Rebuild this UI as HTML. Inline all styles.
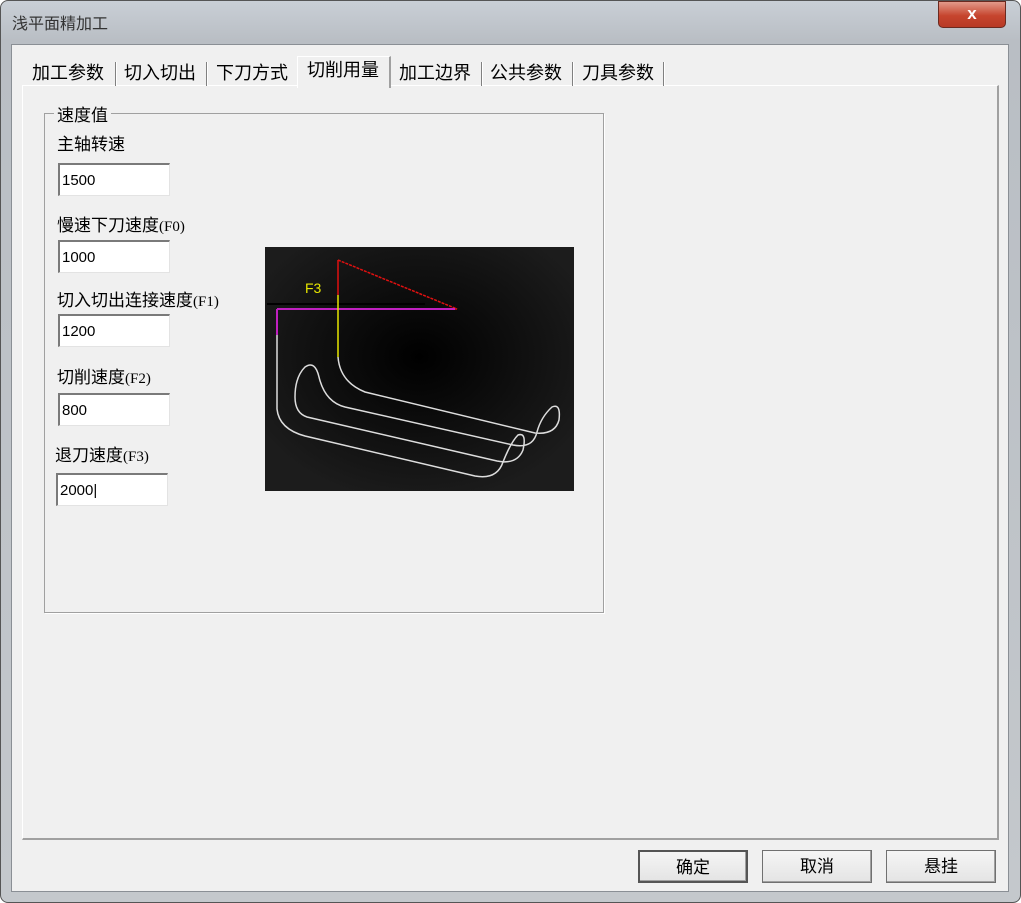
<!DOCTYPE html>
<html><head><meta charset="utf-8"><style>
*{margin:0;padding:0;box-sizing:border-box}
body{width:1021px;height:903px;overflow:hidden;background:#fff;font-family:"Liberation Sans","Noto Sans CJK SC",sans-serif;font-size:17px;color:#000;position:relative}
.a{position:absolute}
.frame{left:0;top:0;width:1021px;height:903px;border-radius:8px;background:linear-gradient(#c9cfd6,#b9bec4 40px,#c4c8cc);border:1px solid #555}
.client{left:11px;top:44px;width:998px;height:848px;background:#f0f0f0;border:1px solid #8a8f95}
.panel{left:22px;top:85px;width:977px;height:755px;border-left:1px solid #fff;border-top:1px solid #fff;border-right:2px solid #a0a0a0;border-bottom:2px solid #a0a0a0}
.tab{top:59px;height:28px;line-height:28px;font-size:18px}
.sep{top:62px;width:2px;height:24px;border-left:1px solid #808080;border-right:1px solid #fff}
.lbl{left:57px}
.p{font-size:15px;font-family:'Liberation Serif',serif}
.in{left:58px;width:112px;height:33px;background:#fff;border-top:2px solid #7a7a7a;border-left:2px solid #7a7a7a;border-right:1px solid #e3e3e3;border-bottom:1px solid #e3e3e3;font-size:15px;padding:7px 0 0 2px}
.btn{top:850px;height:33px;width:110px;background:linear-gradient(#f5f5f5,#e4e4e4);border:1px solid #707070;text-align:center;line-height:31px;font-size:17px;box-shadow:inset -1px -1px #a0a0a0}
</style></head><body>
<div class="a frame"></div>
<div class="a" style="left:12px;top:10px;font-size:16px;color:#333">浅平面精加工</div>
<div class="a" style="left:938px;top:1px;width:68px;height:27px;border-radius:0 0 5px 5px;background:linear-gradient(#e29a8a,#c6452e 55%,#b83a25);border:1px solid #6b2a20;color:#fff;text-align:center;font-weight:bold;font-size:17px;line-height:24px">x</div>
<div class="a client"></div>
<div class="a panel"></div>
<div class="a" style="left:297px;top:56px;width:94px;height:32px;background:#f0f0f0;border:1px solid #fff;border-bottom:none;border-right:2px solid #a0a0a0"></div>
<div class="a tab" style="left:32px">加工参数</div><div class="a sep" style="left:115px"></div>
<div class="a tab" style="left:124px">切入切出</div><div class="a sep" style="left:206px"></div>
<div class="a tab" style="left:216px">下刀方式</div>
<div class="a tab" style="left:307px;top:56px">切削用量</div>
<div class="a tab" style="left:399px">加工边界</div><div class="a sep" style="left:481px"></div>
<div class="a tab" style="left:490px">公共参数</div><div class="a sep" style="left:572px"></div>
<div class="a tab" style="left:582px">刀具参数</div><div class="a sep" style="left:663px"></div>
<div class="a" style="left:44px;top:113px;width:560px;height:500px;border:1px solid #a0a0a0;box-shadow:1px 1px #fff"></div>
<div class="a" style="left:54px;top:101px;background:#f0f0f0;padding:0 3px">速度值</div>
<div class="a lbl" style="top:130px">主轴转速</div>
<div class="a in" style="top:163px">1500</div>
<div class="a lbl" style="top:211px">慢速下刀速度<span class="p">(F0)</span></div>
<div class="a in" style="top:240px">1000</div>
<div class="a lbl" style="top:286px">切入切出连接速度<span class="p">(F1)</span></div>
<div class="a in" style="top:314px">1200</div>
<div class="a lbl" style="top:363px">切削速度<span class="p">(F2)</span></div>
<div class="a in" style="top:393px">800</div>
<div class="a lbl" style="left:55px;top:441px">退刀速度<span class="p">(F3)</span></div>
<div class="a in" style="left:56px;top:473px">2000|</div>
<svg class="a" style="left:265px;top:247px" width="309" height="244" viewBox="0 0 309 244">
<defs><radialGradient id="g" cx="0.5" cy="0.45" r="0.6"><stop offset="0" stop-color="#000"/><stop offset="1" stop-color="#1c1c1c"/></radialGradient></defs>
<rect width="309" height="244" fill="url(#g)"/>
<path d="M73 13 L73 48" stroke="#e01010" stroke-width="1.5"/>
<path d="M73 13 L192 62 L12 62" stroke="#e01010" stroke-width="1.5" fill="none" stroke-dasharray="3,1"/>
<path d="M2 57 L160 57" stroke="#000" stroke-width="2"/>
<text x="40" y="46" fill="#e6e600" font-size="14" font-family="Liberation Sans">F3</text>
<path d="M12 62 L190 62" stroke="#c020c0" stroke-width="2"/>
<path d="M12 62 L12 88" stroke="#c020c0" stroke-width="2"/>
<path d="M73 48 L73 110" stroke="#e6e600" stroke-width="1.5"/>
<g stroke="#ddd" stroke-width="1.5" fill="none">
<path d="M12 88 L12 162 Q14 182 40 189 L210 229 Q232 233 238 215 Q246 195 253 188 Q262 185 258 203 Q252 218 232 214 L42 170 Q30 166 30 150 Q30 130 40 120 Q50 113 54 130 Q60 155 80 160 L248 198 Q268 202 272 185 Q276 170 287 160 Q296 156 294 173 Q290 188 270 186 L100 145 Q75 135 73 110"/>
</g>
</svg>
<div class="a btn" style="left:638px;border:2px solid #555">确定</div>
<div class="a btn" style="left:762px">取消</div>
<div class="a btn" style="left:886px">悬挂</div>
</body></html>
